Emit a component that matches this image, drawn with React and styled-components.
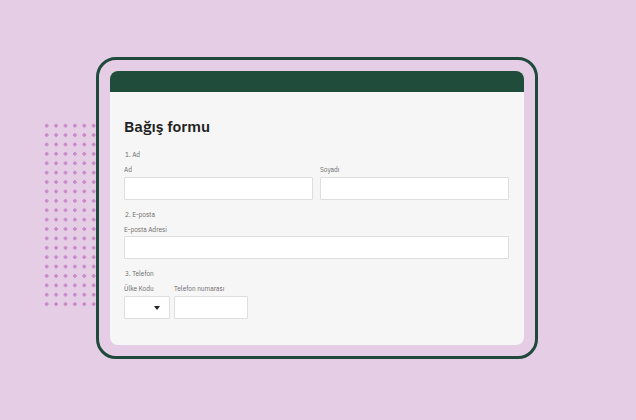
import React from "react";
import styled, { createGlobalStyle } from "styled-components";

const GlobalStyle = createGlobalStyle`
  html, body {
    margin: 0;
    padding: 0;
    background: #e6cde6;
  }
  body {
    font-family: "IBM Plex Sans", Inter, "Noto Sans", sans-serif;
  }
`;

const Stage = styled.div`
  position: relative;
  width: 636px;
  height: 420px;
  padding: 57px 0 0 96px;
  box-sizing: border-box;
  overflow: hidden;
`;

const Dots = styled.div`
  position: absolute;
  left: 41.5px;
  top: 121px;
  width: 56px;
  height: 189px;
  background-image: radial-gradient(circle, #c98ac8 1.5px, transparent 1.9px);
  background-size: 9.4px 9.4px;
`;

const Frame = styled.div`
  position: relative;
  z-index: 1;
  width: 442px;
  height: 302px;
  box-sizing: border-box;
  border: 3px solid #1f4a3b;
  border-radius: 20px;
  padding: 11px;
  background: #e6cde6;
`;

const Card = styled.div`
  height: 100%;
  background: #f6f6f6;
  border-radius: 8px;
  overflow: hidden;
  display: flex;
  flex-direction: column;
`;

const Header = styled.div`
  height: 21px;
  flex-shrink: 0;
  background: #1f4c3b;
`;

const Body = styled.div`
  padding: 24px 15px 0 14px;
  display: flex;
  flex-direction: column;
`;

const Title = styled.h1`
  margin: 0 0 15px;
  font-size: 15.5px;
  line-height: 20px;
  font-weight: 600;
  color: #222;
`;

const Section = styled.div`
  display: flex;
  flex-direction: column;
  margin-bottom: 11px;
`;

const Question = styled.div`
  font-size: 6.5px;
  line-height: 8px;
  color: #6a6a6a;
  padding-left: 1px;
  margin-bottom: 7px;
`;

const Row = styled.div`
  display: flex;
  gap: ${(p) => p.$gap || 7}px;
`;

const Field = styled.div`
  display: flex;
  flex-direction: column;
  flex: ${(p) => (p.$w ? "none" : 1)};
  width: ${(p) => (p.$w ? `${p.$w}px` : "auto")};
`;

const Label = styled.div`
  font-size: 6.5px;
  line-height: 8px;
  color: #6a6a6a;
  margin-bottom: 2.5px;
`;

const Input = styled.div`
  position: relative;
  height: 23px;
  box-sizing: border-box;
  background: #fff;
  border: 1px solid #dedede;
  border-radius: 1px;
`;

const Caret = styled.span`
  position: absolute;
  right: 9px;
  top: 9px;
  width: 0;
  height: 0;
  border-left: 3px solid transparent;
  border-right: 3px solid transparent;
  border-top: 4px solid #222;
`;

export default function App() {
  return (
    <>
      <GlobalStyle />
      <Stage>
        <Dots />
        <Frame>
          <Card>
            <Header />
            <Body>
              <Title>Bağış formu</Title>
              <Section>
                <Question>1. Ad</Question>
                <Row>
                  <Field>
                    <Label>Ad</Label>
                    <Input />
                  </Field>
                  <Field>
                    <Label>Soyadı</Label>
                    <Input />
                  </Field>
                </Row>
              </Section>
              <Section>
                <Question>2. E-posta</Question>
                <Field>
                  <Label>E-posta Adresi</Label>
                  <Input />
                </Field>
              </Section>
              <Section>
                <Question>3. Telefon</Question>
                <Row $gap={4}>
                  <Field $w={46}>
                    <Label>Ülke Kodu</Label>
                    <Input>
                      <Caret />
                    </Input>
                  </Field>
                  <Field $w={74}>
                    <Label>Telefon numarası</Label>
                    <Input />
                  </Field>
                </Row>
              </Section>
            </Body>
          </Card>
        </Frame>
      </Stage>
    </>
  );
}
